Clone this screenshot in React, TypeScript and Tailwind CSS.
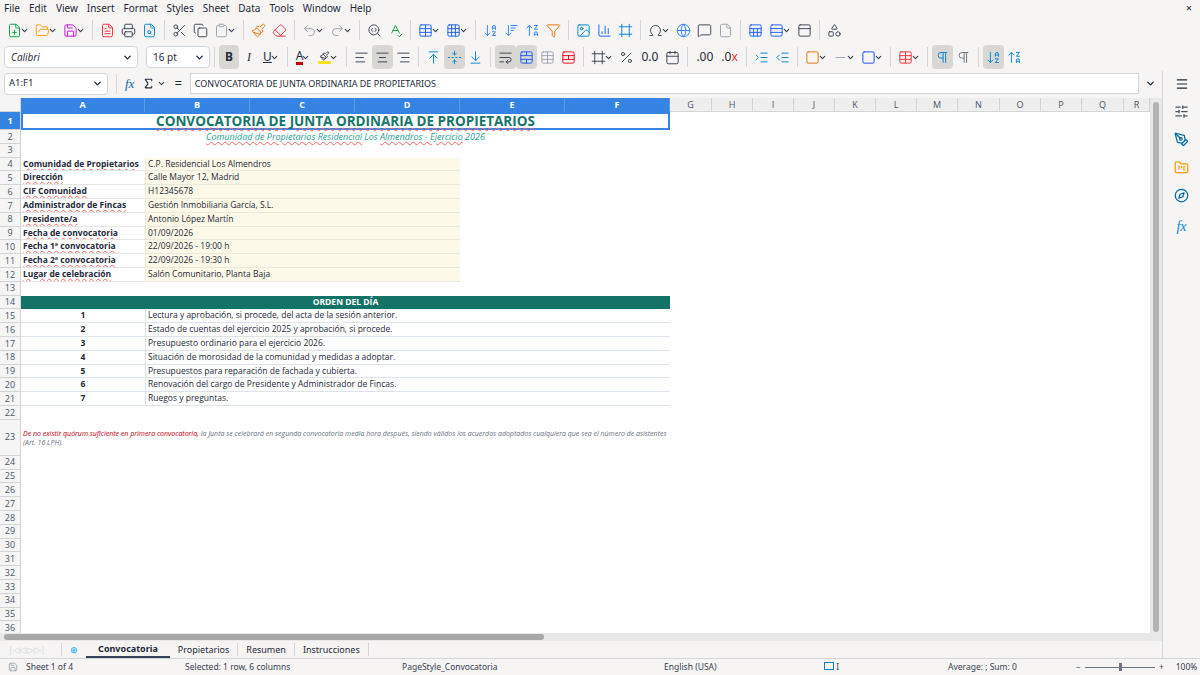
import React from "react";
import {
  FilePlus, FolderOpen, Save, FileText, Printer, FileSearch, Scissors, Copy, Clipboard, Paintbrush, Eraser,
  Undo2, Redo2, SearchCode, SpellCheck, Table, Grid3x3, ArrowDownAZ, ArrowUpZA, ArrowDownWideNarrow, Filter, Image,
  BarChart3, Frame, Omega, Globe, MessageSquare, File, Sheet, Rows3, Shapes, ChevronDown, AlignLeft, AlignCenter,
  AlignRight, ArrowUpToLine, FoldVertical, ArrowDownToLine, WrapText, TableCellsMerge, TableCellsSplit, Percent,
  Calendar, IndentIncrease, IndentDecrease, Square, Minus, PanelTop, Pilcrow, Menu, SlidersHorizontal, PenTool,
  FolderKanban, Compass, Sigma,
} from "lucide-react";

const F = { fontFamily: '"Noto Sans","Open Sans",sans-serif' };
const CAL = { fontFamily: '"Open Sans","Noto Sans",sans-serif' };

const colW = [124, 105, 105, 105, 105, 105, 42, 41, 41, 41, 41, 41, 41, 42, 41, 41, 42, 26];
const colN = "ABCDEFGHIJKLMNOPQR".split("");

function Dd() {
  return <ChevronDown size={9} strokeWidth={3} className="text-gray-700 -ml-0.5" />;
}
function Sep() {
  return <div className="w-px h-5 bg-gray-300 mx-1" />;
}
function I({ c, color = "text-gray-700", dd = false, active = false }: { c: any; color?: string; dd?: boolean; active?: boolean }) {
  const C = c;
  return (
    <div className={`flex items-center h-6 px-[3px] rounded ${active ? "bg-[#d9d7d3]" : ""}`}>
      <C size={15} strokeWidth={1.5} className={color} />
      {dd && <Dd />}
    </div>
  );
}

function RowHead({ n, h, active = false }: { n: number; h: string; active?: boolean }) {
  return (
    <div className={`w-[21px] shrink-0 ${h} flex items-center justify-center text-[9px] border-b border-r border-[#d4d4d4] ${active ? "bg-[#3584e4] text-white font-bold" : "bg-[#f5f5f5] text-gray-600"}`}>
      {n}
    </div>
  );
}

const info: [string, string][] = [
  ["Comunidad de Propietarios", "C.P. Residencial Los Almendros"],
  ["Dirección", "Calle Mayor 12, Madrid"],
  ["CIF Comunidad", "H12345678"],
  ["Administrador de Fincas", "Gestión Inmobiliaria García, S.L."],
  ["Presidente/a", "Antonio López Martín"],
  ["Fecha de convocatoria", "01/09/2026"],
  ["Fecha 1ª convocatoria", "22/09/2026 - 19:00 h"],
  ["Fecha 2ª convocatoria", "22/09/2026 - 19:30 h"],
  ["Lugar de celebración", "Salón Comunitario, Planta Baja"],
];
const orden = [
  "Lectura y aprobación, si procede, del acta de la sesión anterior.",
  "Estado de cuentas del ejercicio 2025 y aprobación, si procede.",
  "Presupuesto ordinario para el ejercicio 2026.",
  "Situación de morosidad de la comunidad y medidas a adoptar.",
  "Presupuestos para reparación de fachada y cubierta.",
  "Renovación del cargo de Presidente y Administrador de Fincas.",
  "Ruegos y preguntas.",
];

const RH = "h-[13.8px]";

export default function App() {
  return (
    <div className="w-[1200px] h-[675px] bg-[#f6f5f4] flex flex-col overflow-hidden text-gray-800" style={F}>
      {/* menu */}
      <div className="h-[17px] flex items-center text-[10px] px-1 gap-[9px] relative">
        {["File", "Edit", "View", "Insert", "Format", "Styles", "Sheet", "Data", "Tools", "Window", "Help"].map((m) => (
          <span key={m}>{m}</span>
        ))}
        <span className="absolute right-2 text-[11px]">×</span>
      </div>
      {/* toolbar 1 */}
      <div className="h-[26px] flex items-center px-1">
        <I c={FilePlus} color="text-green-600" dd />
        <I c={FolderOpen} color="text-amber-500" dd />
        <I c={Save} color="text-fuchsia-600" dd />
        <Sep />
        <I c={FileText} color="text-red-500" />
        <I c={Printer} />
        <I c={FileSearch} color="text-sky-600" />
        <Sep />
        <I c={Scissors} />
        <I c={Copy} />
        <I c={Clipboard} color="text-gray-400" dd />
        <Sep />
        <I c={Paintbrush} color="text-amber-600" />
        <I c={Eraser} color="text-red-500" />
        <Sep />
        <I c={Undo2} color="text-gray-400" dd />
        <I c={Redo2} color="text-gray-400" dd />
        <Sep />
        <I c={SearchCode} />
        <I c={SpellCheck} color="text-green-600" />
        <Sep />
        <I c={Table} color="text-blue-600" dd />
        <I c={Grid3x3} color="text-blue-600" dd />
        <Sep />
        <I c={ArrowDownAZ} color="text-blue-500" />
        <I c={ArrowDownWideNarrow} color="text-blue-500" />
        <I c={ArrowUpZA} color="text-blue-500" />
        <I c={Filter} color="text-amber-600" />
        <Sep />
        <I c={Image} color="text-sky-600" />
        <I c={BarChart3} color="text-blue-600" />
        <I c={Frame} color="text-sky-600" />
        <Sep />
        <I c={Omega} dd />
        <I c={Globe} color="text-blue-500" />
        <I c={MessageSquare} />
        <I c={File} color="text-gray-400" />
        <Sep />
        <I c={Sheet} color="text-blue-600" />
        <I c={Rows3} color="text-blue-600" dd />
        <I c={PanelTop} />
        <Sep />
        <I c={Shapes} />
      </div>
      {/* toolbar 2 */}
      <div className="h-[28px] flex items-center px-1 gap-0">
        <div className="w-[134px] h-[22px] bg-white border border-gray-300 rounded flex items-center justify-between pl-1.5 pr-1 text-[10px] italic" style={CAL}>
          Calibri <ChevronDown size={11} strokeWidth={3} />
        </div>
        <div className="w-[64px] h-[22px] bg-white border border-gray-300 rounded flex items-center justify-between pl-1.5 pr-1 text-[10px] ml-2">
          16 pt <ChevronDown size={11} strokeWidth={3} />
        </div>
        <Sep />
        <div className="w-5 h-6 bg-[#d9d7d3] rounded flex items-center justify-center text-[12px] font-bold">B</div>
        <div className="w-5 h-6 flex items-center justify-center text-[12px] italic" style={{ fontFamily: "Liberation Serif" }}>I</div>
        <div className="h-6 flex items-center px-1 text-[12px] underline">U<Dd /></div>
        <Sep />
        <div className="h-6 flex items-center px-1 text-[12px]"><span className="border-b-[3px] border-red-700 leading-none">A</span><Dd /></div>
        <div className="h-6 flex items-center px-1"><Paintbrush size={13} className="border-b-[3px] border-yellow-300" /><Dd /></div>
        <Sep />
        <I c={AlignLeft} />
        <I c={AlignCenter} active />
        <I c={AlignRight} />
        <Sep />
        <I c={ArrowUpToLine} color="text-sky-600" />
        <I c={FoldVertical} color="text-sky-600" active />
        <I c={ArrowDownToLine} color="text-sky-600" />
        <Sep />
        <I c={WrapText} active />
        <I c={TableCellsMerge} color="text-blue-600" active />
        <I c={Table} color="text-gray-400" />
        <I c={TableCellsSplit} color="text-red-600" />
        <Sep />
        <I c={Frame} dd />
        <I c={Percent} />
        <span className="text-[12px] px-1">0.0</span>
        <I c={Calendar} />
        <Sep />
        <span className="text-[12px] px-1">.00</span>
        <span className="text-[12px] px-1">.0<span className="text-red-500">x</span></span>
        <Sep />
        <I c={IndentIncrease} color="text-sky-600" />
        <I c={IndentDecrease} color="text-sky-600" />
        <Sep />
        <I c={Square} color="text-amber-600" dd />
        <I c={Minus} color="text-gray-400" dd />
        <I c={Square} color="text-blue-700" dd />
        <Sep />
        <I c={Table} color="text-red-500" dd />
        <Sep />
        <I c={Pilcrow} color="text-sky-600" active />
        <I c={Pilcrow} color="text-gray-500" />
        <Sep />
        <I c={ArrowDownAZ} color="text-sky-600" active />
        <I c={ArrowUpZA} color="text-sky-600" />
      </div>
      {/* body */}
      <div className="flex-1 flex min-h-0">
        <div className="flex-1 flex flex-col min-w-0">
          {/* formula bar */}
          <div className="h-[25px] flex items-center px-1 gap-1">
            <div className="w-[104px] h-[22px] bg-white border border-gray-300 rounded flex items-center justify-between pl-1 pr-1 text-[9.5px]">
              A1:F1 <ChevronDown size={11} strokeWidth={3} />
            </div>
            <div className="w-px h-5 bg-gray-300 mx-1" />
            <span className="text-[13px] italic text-sky-700" style={{ fontFamily: "Liberation Serif" }}>fx</span>
            <Sigma size={13} className="ml-1" /><Dd />
            <span className="text-[13px] mx-1">=</span>
            <div className="flex-1 h-[21px] bg-white border border-gray-300 flex items-center px-1 text-[9px]">
              CONVOCATORIA DE JUNTA ORDINARIA DE PROPIETARIOS
            </div>
            <ChevronDown size={11} strokeWidth={3} className="mx-0.5" />
          </div>
          {/* grid area */}
          <div className="flex-1 flex mt-[2px] min-h-0">
            <div className="w-[1150px] flex flex-col bg-white overflow-hidden" style={CAL}>
              {/* col header */}
              <div className="h-[14px] flex shrink-0">
                <div className="w-[21px] bg-[#f5f5f5] border-r border-b border-[#d4d4d4]" />
                {colN.map((c, i) => (
                  <div key={c} style={{ width: colW[i] }} className={`shrink-0 flex items-center justify-center text-[9px] border-r ${i < 6 ? "bg-[#3584e4] text-white font-bold border-[#5a9be8]" : "bg-[#eeeeee] text-gray-600 border-[#d4d4d4] border-b"}`}>
                    {c}
                  </div>
                ))}
              </div>
              {/* row 1 */}
              <div className="flex h-[18px]">
                <RowHead n={1} h="h-[18px]" active />
                <div className="w-[649px] h-[18px] border-2 border-[#3584e4] flex items-center justify-center text-[13.5px] font-bold text-[#16766b] underline decoration-wavy decoration-red-400 decoration-1">
                  CONVOCATORIA DE JUNTA ORDINARIA DE PROPIETARIOS
                </div>
              </div>
              <div className="flex">
                <RowHead n={2} h={RH} />
                <div className="w-[649px] flex items-center justify-center text-[9px] italic text-[#2aa198]">
                  <span className="underline decoration-wavy decoration-red-400">Comunidad de Propietarios Residencial</span>&nbsp;Los&nbsp;<span className="underline decoration-wavy decoration-red-400">Almendros - Ejercicio</span>&nbsp;2026
                </div>
              </div>
              <div className="flex"><RowHead n={3} h={RH} /></div>
              {info.map(([a, b], i) => (
                <div className="flex" key={a}>
                  <RowHead n={4 + i} h={RH} />
                  <div className={`w-[124px] ${RH} flex items-center px-0.5 text-[8.5px] font-bold border-b border-[#e4e4e4] underline decoration-wavy decoration-red-400 truncate`}>{a}</div>
                  <div className={`w-[315px] ${RH} flex items-center px-0.5 text-[8.5px] bg-[#fdf9e8] border-b border-l border-[#ece8da]`}>{b}</div>
                </div>
              ))}
              <div className="flex"><RowHead n={13} h={RH} /></div>
              <div className="flex">
                <RowHead n={14} h={RH} />
                <div className={`w-[649px] ${RH} bg-[#137366] text-white font-bold text-[8.5px] flex items-center justify-center`}>ORDEN DEL DÍA</div>
              </div>
              {orden.map((t, i) => (
                <div className="flex" key={t}>
                  <RowHead n={15 + i} h={RH} />
                  <div className={`w-[124px] ${RH} flex items-center justify-center text-[8.5px] font-bold border-b border-[#dde3ea]`}>{i + 1}</div>
                  <div className={`w-[525px] ${RH} flex items-center px-0.5 text-[8.5px] border-b border-l border-[#dde3ea]`}>{t}</div>
                </div>
              ))}
              <div className="flex"><RowHead n={22} h={RH} /></div>
              <div className="flex">
                <RowHead n={23} h="h-[36px]" />
                <div className="w-[649px] h-[36px] flex items-center px-0.5 text-[7px] italic text-gray-500 leading-[9px]">
                  <p><span className="text-red-700">De no existir quórum suficiente en primera convocatoria,</span> la Junta se celebrará en segunda convocatoria media hora después, siendo válidos los acuerdos adoptados cualquiera que sea el número de asistentes (Art. 16 LPH).</p>
                </div>
              </div>
              {Array.from({ length: 13 }, (_, i) => (
                <div className="flex" key={i}><RowHead n={24 + i} h={RH} /></div>
              ))}
            </div>
            <div className="w-[12px] bg-[#e8e8e8] flex justify-center pt-1">
              <div className="w-[6px] h-[530px] bg-[#b3b3b3] rounded" />
            </div>
          </div>
          {/* h scroll */}
          <div className="h-[8px] bg-[#e8e8e8] flex items-center">
            <div className="w-[540px] h-[6px] bg-[#a8a8a8] rounded ml-1" />
          </div>
          {/* tabs */}
          <div className="h-[17px] flex items-center text-[9px] gap-0">
            <span className="text-gray-300 text-[9px] pl-2 pr-4 tracking-tighter">|◁◁ ▷▷|</span>
            <span className="text-sky-500 px-2 border-l border-gray-300">⊕</span>
            <span className="px-3 font-bold border-b-2 border-gray-700 h-full flex items-center">Convocatoria</span>
            <span className="px-2 border-r border-gray-300">Propietarios</span>
            <span className="px-2 border-r border-gray-300">Resumen</span>
            <span className="px-2 border-r border-gray-300">Instrucciones</span>
          </div>
        </div>
        {/* sidebar */}
        <div className="w-[38px] border-l border-gray-300 flex flex-col items-center gap-[13px] pt-[6px]">
          <Menu size={14} />
          <SlidersHorizontal size={15} className="text-gray-600" />
          <PenTool size={15} className="text-sky-700" />
          <FolderKanban size={15} className="text-amber-500" />
          <Compass size={15} className="text-sky-700" />
          <span className="text-[14px] italic text-sky-600" style={{ fontFamily: "Liberation Serif" }}>fx</span>
        </div>
      </div>
      {/* status */}
      <div className="h-[17px] flex items-center text-[8.5px] text-gray-700 border-t border-gray-300">
        <div className="w-[185px] flex items-center gap-2 pl-2"><Save size={10} className="text-gray-400" />Sheet 1 of 4</div>
        <div className="w-[217px]">Selected: 1 row, 6 columns</div>
        <div className="w-[262px]">PageStyle_Convocatoria</div>
        <div className="w-[160px]">English (USA)</div>
        <div className="w-[124px]"><span className="inline-block w-2.5 h-2 border border-sky-600" /> I</div>
        <div className="w-[128px]">Average: ; Sum: 0</div>
        <div className="flex items-center gap-1">− <div className="w-[70px] h-px bg-gray-500 relative"><div className="absolute left-[34px] -top-1 w-[3px] h-2 bg-gray-500" /></div> + <span className="ml-2">100%</span></div>
      </div>
    </div>
  );
}
